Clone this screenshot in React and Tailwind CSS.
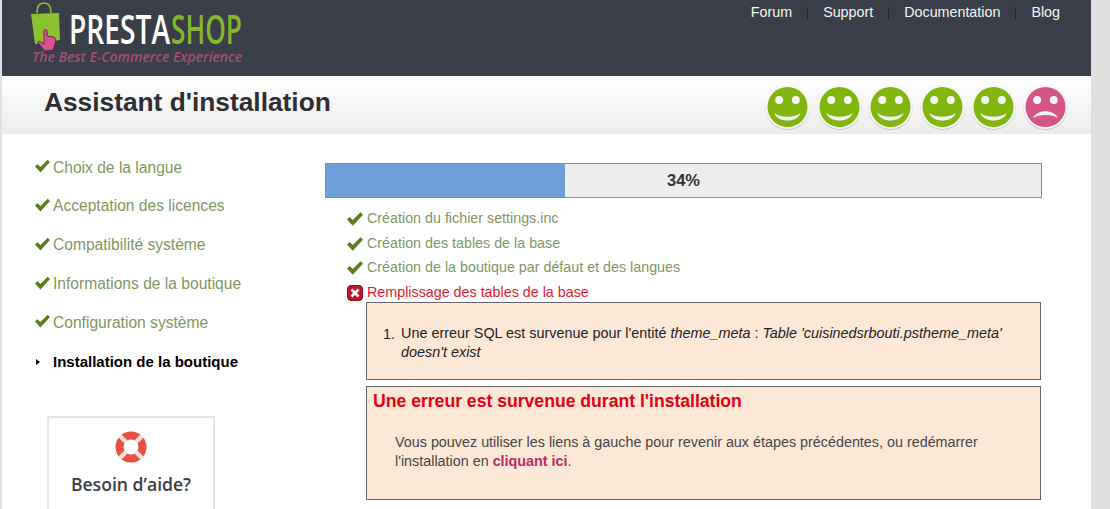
const sidebar_steps = [
  'Choix de la langue',
  'Acceptation des licences',
  'Compatibilité système',
  'Informations de la boutique',
  'Configuration système',
]

const install_steps = [
  'Création du fichier settings.inc',
  'Création des tables de la base',
  'Création de la boutique par défaut et des langues',
]

const nav_links = ['Forum', 'Support', 'Documentation', 'Blog']

function Check({ className }) {
  return (
    <svg viewBox="0 0 16 14" className={className}>
      <path d="M0 7.5 L2.6 5 L5.8 8 L13.6 0.3 L16 2.8 L5.8 13.8 Z" fill="#5d7c1e" />
    </svg>
  )
}

function Logo() {
  return (
    <svg width="260" height="76" viewBox="0 0 260 76" className="shrink-0">
      <path d="M37 13 C37 6 39 3 44 3 C49 3 51 6 51 13" fill="none" stroke="#8dbb3a" strokeWidth="1.6" />
      <path d="M31 14 L59 13 L60 40 L35 44 Z" fill="#8dc033" />
      <path
        d="M44 31 C44 29 47 29 47 31 L47.5 36 L54 37 C56 38 56 41 55 44 L53 50 L45 51 L38 43 C38 41 40 41 41 42 L44 44 Z"
        fill="#df4f8a"
        stroke="#3a2a35"
        strokeWidth="0.8"
      />
      <text x="69" y="44" fontFamily="'Open Sans', sans-serif" fontSize="40" fontWeight="600" fill="#ffffff" textLength="101" lengthAdjust="spacingAndGlyphs">
        PRESTA
      </text>
      <text x="171" y="44" fontFamily="'Open Sans', sans-serif" fontSize="40" fontWeight="600" fill="#86b52e" textLength="71" lengthAdjust="spacingAndGlyphs">
        SHOP
      </text>
      <text x="32" y="62" fontFamily="'Open Sans', sans-serif" fontSize="14" fontStyle="italic" fontWeight="600" fill="#a24f78" textLength="210" lengthAdjust="spacingAndGlyphs">
        The Best E-Commerce Experience
      </text>
    </svg>
  )
}

function Smiley({ sad }) {
  return (
    <svg width="46" height="46" viewBox="0 0 46 46" className="shrink-0">
      <circle cx="23.5" cy="24" r="22" fill="#c9c9c9" />
      <circle cx="23.5" cy="23" r="22" fill="#f8f8f8" />
      <circle cx="23.5" cy="23" r="20" fill={sad ? '#d65587' : '#82b60f'} />
      <circle cx="15.2" cy="16" r="4" fill="#f4f4f4" />
      <circle cx="31.8" cy="16" r="4" fill="#f4f4f4" />
      {sad ? (
        <path d="M11 34 C15 25 32 25 36 34 C30 30 17 30 11 34 Z" fill="#f4f4f4" />
      ) : (
        <path d="M10.5 29 C16 34 31 34 36.5 29 C34 39 13 39 10.5 29 Z" fill="#f4f4f4" />
      )}
    </svg>
  )
}

function Lifebuoy() {
  return (
    <svg width="32" height="32" viewBox="0 0 32 32">
      <circle cx="16" cy="16" r="11.5" fill="none" stroke="#e9503f" strokeWidth="8" />
      <path d="M5 5 L11 11 M27 5 L21 11 M5 27 L11 21 M27 27 L21 21" stroke="#efe3df" strokeWidth="4.5" />
    </svg>
  )
}

function App() {
  return (
    <div className="flex w-[1110px] h-[509px] overflow-hidden bg-[#e0e0e0] font-['Liberation_Sans',Arial,sans-serif]">
      <div className="ml-[2px] w-[1089px] shrink-0 bg-white">
        <header className="flex h-[76px] justify-between bg-[#393e49]">
          <div className="-ml-[2px]">
            <Logo />
          </div>
          <nav className="flex h-[26px] items-center pr-[31px] text-[14.3px] text-[#f6f6ee]">
            {nav_links.map((link, i) => (
              <div key={link} className="flex items-center">
                <a href="#">{link}</a>
                {i < nav_links.length - 1 && <span className="mx-[15px] h-[13px] w-px bg-[#23262d]" />}
              </div>
            ))}
          </nav>
        </header>

        <div className="flex h-[58px] items-center justify-between bg-gradient-to-b from-white to-[#ececec] pl-[42px] pr-[23px]">
          <h1 className="pb-[4px] text-[26.3px] font-bold text-[#2f2f33]">Assistant d'installation</h1>
          <div className="flex gap-[5.6px] pt-[3px]">
            <Smiley />
            <Smiley />
            <Smiley />
            <Smiley />
            <Smiley />
            <Smiley sad />
          </div>
        </div>

        <div className="flex">
          <aside className="w-[323px] shrink-0 pt-[13.925px]">
            <ul className="text-[15.6px] text-[#7f9763]">
              {sidebar_steps.map((step) => (
                <li key={step} className="flex h-[38.75px] items-center pl-[33px]">
                  <Check className="mb-[2px] mr-[3px] h-[14px] w-[15px]" />
                  {step}
                </li>
              ))}
              <li className="mt-[1.325px] flex h-[39px] items-center pl-[33px] text-[15px] font-bold text-black">
                <span className="ml-[1px] mr-[13px] h-0 w-0 border-y-[3.5px] border-l-[4px] border-y-transparent border-l-black" />
                Installation de la boutique
              </li>
            </ul>
            <div className="ml-[45px] mt-[34px] flex h-[130px] w-[168px] flex-col items-center border-2 border-[#e6e6e6] pt-[13px]">
              <Lifebuoy />
              <p className="mt-[8px] font-['Open_Sans',sans-serif] text-[17.6px] font-semibold text-[#3a3d45]">
                Besoin d’aide?
              </p>
            </div>
          </aside>

          <main className="w-[717px] shrink-0 pt-[29px]">
            <div className="relative flex h-[35px] items-center justify-center border border-[#8b8b8b] bg-[#ededed]">
              <div className="absolute inset-y-0 left-0 w-[239px] bg-[#6f9fd8]" />
              <span className="relative text-[16.5px] font-bold text-[#333]">34%</span>
            </div>

            <ul className="mt-[8.9px] h-[95.1px] pl-[22px] text-[14.3px]">
              {install_steps.map((step) => (
                <li key={step} className="flex h-[24.5px] items-center text-[#7f9763]">
                  <Check className="mr-[4px] h-[14px] w-[16px]" />
                  {step}
                </li>
              ))}
              <li className="flex h-[24.5px] items-center text-[#e01b32]">
                <span className="mr-[4px] flex h-[16px] w-[16px] items-center justify-center rounded-[4px] border border-[#8f0f20] bg-[#c3132b]">
                  <svg width="10" height="10" viewBox="0 0 10 10">
                    <path d="M1.5 1.5 L8.5 8.5 M8.5 1.5 L1.5 8.5" stroke="#fff" strokeWidth="2.6" />
                  </svg>
                </span>
                Remplissage des tables de la base
              </li>
            </ul>

            <div className="ml-[41px] flex h-[78px] w-[675px] border border-[#666] bg-[#fce8d7] pl-[16px] pr-[30px] pt-[21px] text-[14.4px] leading-[19px] text-[#222]">
              <span className="w-[18px] shrink-0 pt-[1px]">1.</span>
              <p>
                Une erreur SQL est survenue pour l'entité <i>theme_meta</i> :{' '}
                <i>Table 'cuisinedsrbouti.pstheme_meta' doesn't exist</i>
              </p>
            </div>

            <div className="ml-[41px] mt-[6px] h-[114px] w-[675px] border border-[#666] bg-[#fce8d7] pl-[6px] pt-[4px]">
              <h2 className="text-[17.6px] font-bold leading-[21px] text-[#e60012]">
                Une erreur est survenue durant l'installation
              </h2>
              <p className="ml-[22px] mt-[21px] w-[600px] text-[14.35px] leading-[19px] text-[#454545]">
                Vous pouvez utiliser les liens à gauche pour revenir aux étapes précédentes, ou redémarrer
                l'installation en <a href="#" className="font-bold text-[#b92f62]">cliquant ici</a>.
              </p>
            </div>
          </main>
        </div>
      </div>
    </div>
  )
}

export default App
